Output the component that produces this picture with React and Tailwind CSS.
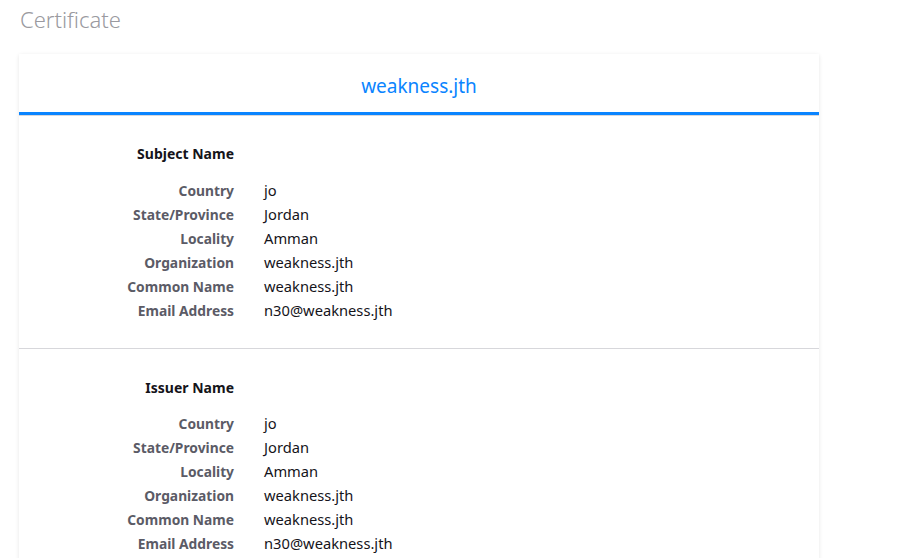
const rows = [
  ["Country", "jo"],
  ["State/Province", "Jordan"],
  ["Locality", "Amman"],
  ["Organization", "weakness.jth"],
  ["Common Name", "weakness.jth"],
  ["Email Address", "n30@weakness.jth"],
];

function Section({ title, last }) {
  return (
    <div className={last ? "pt-[27px] pb-[26px]" : "pt-[26px] pb-[26px] border-b border-[#d7d7db]"}>
      <div className="grid grid-cols-[215px_1fr] gap-x-[30px]">
        <div className="text-right font-bold text-[#15141a] leading-[24px]">{title}</div>
        <div />
      </div>
      <div className={`${last ? "mt-[11px]" : "mt-[12px]"} grid grid-cols-[215px_1fr] auto-rows-[24px] gap-x-[30px] items-baseline`}>
        {rows.map(([k, v]) => (
          <div key={k} className="contents">
            <div className="text-right font-bold text-[#5b5b66] leading-[24px] text-[13.8px]">{k}</div>
            <div className="text-[#15141a] leading-[24px] text-[14.7px]">{v}</div>
          </div>
        ))}
      </div>
    </div>
  );
}

export default function App() {
  return (
    <div className="min-h-[558px] bg-white text-[14px]" style={{ fontFamily: '"Noto Sans", sans-serif' }}>
      <div className="pl-[19px] pt-[4px]">
        <h1 className="text-[22px] font-light text-[#9a9aa0] leading-[30px] pl-[1px]">Certificate</h1>
        <div className="mt-[20px] w-[800px] bg-white shadow-[0_1px_4px_rgba(0,0,0,0.1)]">
          <div className="h-[61px] pt-[6px] flex items-center justify-center text-[19px] text-[#0a84ff] border-b-[3px] border-[#0a84ff]">
            weakness.jth
          </div>
          <div className="h-px bg-[#d7d7db]" />
          <Section title="Subject Name" />
          <Section title="Issuer Name" last />
        </div>
      </div>
    </div>
  );
}
